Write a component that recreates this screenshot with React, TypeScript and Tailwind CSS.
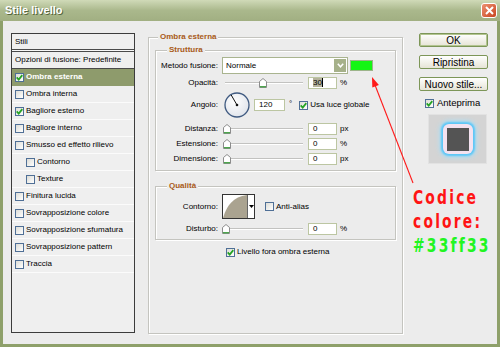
const UI = "font-['Liberation_Sans',Arial,sans-serif]";

function Check({ checked }: { checked?: boolean }) {
  return (
    <span className="w-[9px] h-[9px] shrink-0 border border-[#4f6f96] bg-gradient-to-br from-[#dcdcd6] to-white flex items-center justify-center">
      {checked && (
        <svg width="7" height="7" viewBox="0 0 7 7">
          <path d="M0.7 3.4 L2.7 5.6 L6.3 1.1" stroke="#23a323" strokeWidth="1.7" fill="none" />
        </svg>
      )}
    </span>
  );
}

function Slider({ thumb }: { thumb: number }) {
  return (
    <div className="relative w-[84px] h-[12px] shrink-0">
      <div className="absolute left-[3px] right-[3px] top-[5px] h-[2px] bg-[#c2c2c0] border-b border-white" />
      <svg className="absolute top-[1px]" style={{ left: thumb }} width="8" height="10" viewBox="0 0 8 10">
        <path d="M0.5 3.5 L4 0.5 L7.5 3.5 L7.5 9.5 L0.5 9.5 Z" fill="#fff" stroke="#8c8c8c" />
        <path d="M1 8.7 L7 8.7" stroke="#4ea64e" strokeWidth="1.4" />
      </svg>
    </div>
  );
}

function Field({ value, w = 29, selected }: { value: string; w?: number; selected?: boolean }) {
  return (
    <div
      className="h-[12px] shrink-0 border border-[#bcc6a2] bg-white pl-[4px] text-[8px] leading-[10px] text-black"
      style={{ width: w }}
    >
      {selected ? (
        <span className="bg-[#b4b29c] border-r border-black">{value}</span>
      ) : (
        value
      )}
    </div>
  );
}

function Label({ children }: { children: string }) {
  return <span className="w-[62px] shrink-0 text-right text-[8px] text-black">{children}</span>;
}

function Group({ title, className, children }: { title: string; className: string; children: React.ReactNode }) {
  return (
    <div className={"relative border border-[#c4c4bf] shadow-[inset_1px_1px_0_#fff,1px_1px_0_#fff] " + className}>
      <span className="absolute -top-[6px] bg-[#ececec] px-[2px] text-[8px] leading-[10px] font-bold text-[#a85a18]" style={{ left: title === "Ombra esterna" ? 9 : 11 }}>
        {title}
      </span>
      {children}
    </div>
  );
}

function Button({ children, main }: { children: string; main?: boolean }) {
  return (
    <div
      className={
        "w-[69px] h-[14px] rounded-[2px] border border-[#7d9658] bg-gradient-to-b from-white to-[#e6e4d6] flex items-center justify-center text-[10px] text-black " +
        (main ? "shadow-[inset_0_0_0_1px_#b3c590]" : "")
      }
    >
      {children}
    </div>
  );
}

const rows: { label: string; checked?: boolean; indent?: boolean; sel?: boolean }[] = [
  { label: "Ombra esterna", checked: true, sel: true },
  { label: "Ombra interna" },
  { label: "Bagliore esterno", checked: true },
  { label: "Bagliore interno" },
  { label: "Smusso ed effetto rilievo" },
  { label: "Contorno", indent: true },
  { label: "Texture", indent: true },
  { label: "Finitura lucida" },
  { label: "Sovrapposizione colore" },
  { label: "Sovrapposizione sfumatura" },
  { label: "Sovrapposizione pattern" },
  { label: "Traccia" },
];

export default function App() {
  return (
    <div className={"relative w-[500px] h-[347px] flex flex-col bg-[#8ea06a] overflow-hidden " + UI}>
      {/* title bar */}
      <div className="h-[21px] shrink-0 flex items-center justify-between pl-[5px] pr-[3px] bg-gradient-to-b from-[#d0dab8] via-[#aab88c] to-[#a1af82]">
        <span className="text-[11px] font-bold text-white [text-shadow:1px_1px_0_#56663c]">Stile livello</span>
        <div className="w-[16px] h-[15px] rounded-[3px] border border-white bg-gradient-to-br from-[#ec9070] to-[#c8421c] flex items-center justify-center">
          <svg width="9" height="9" viewBox="0 0 9 9">
            <path d="M1 1 L8 8 M8 1 L1 8" stroke="#fff" strokeWidth="2" />
          </svg>
        </div>
      </div>

      {/* body */}
      <div className="flex-1 mx-[3px] mb-[3px] bg-[#ececec] flex pl-[8px] pt-[12px]">
        {/* styles list */}
        <div className="w-[124px] h-[300px] shrink-0 border border-[#3c3c3c] bg-[#efefef] flex flex-col text-[8px] text-black">
          <div className="h-[16px] flex items-center pl-[3px] border-b border-[#4a4a4a]">Stili</div>
          <div className="h-[1px] bg-[#f8f8f8]" />
          <div className="h-[18px] flex items-center pl-[3px] border-y border-[#4a4a4a]">Opzioni di fusione: Predefinite</div>
          {rows.map((r) => (
            <div
              key={r.label}
              className={
                "h-[17px] flex items-center gap-[2px] border-b " +
                (r.indent ? "pl-[14px] " : "pl-[3px] ") +
                (r.sel ? "bg-[#8e9b6c] border-[#8e9b6c] text-white font-bold" : "border-[#fbfbfb]")
              }
            >
              <Check checked={r.checked} />
              <span>{r.label}</span>
            </div>
          ))}
        </div>

        {/* main group */}
        <Group title="Ombra esterna" className="ml-[13px] mt-[4px] w-[255px] h-[297px] shrink-0 px-[6px] pt-[12px]">
          <Group title="Struttura" className="h-[121px] pt-[6px] flex flex-col">
            <div className="flex items-center h-[17px]">
              <Label>Metodo fusione:</Label>
              <div className="ml-[4px] w-[126px] h-[17px] border border-[#a9b48f] bg-white flex items-center justify-between pl-[3px] pr-[1px]">
                <span className="text-[8px] text-black">Normale</span>
                <div className="w-[12px] h-[13px] bg-[#a6b18a] flex items-center justify-center">
                  <svg width="7" height="5" viewBox="0 0 7 5">
                    <path d="M0.8 0.8 L3.5 3.8 L6.2 0.8" stroke="#fff" strokeWidth="1.5" fill="none" />
                  </svg>
                </div>
              </div>
              <div className="ml-[2px] w-[23px] h-[11px] bg-[#14f514] border border-[#9cb48a]" />
            </div>
            <div className="flex items-center h-[12px] mt-[3px]">
              <Label>Opacità:</Label>
              <div className="ml-[4px]">
                <Slider thumb={37} />
              </div>
              <div className="ml-[2px]">
                <Field value="30" selected />
              </div>
              <span className="ml-[3px] text-[8px]">%</span>
            </div>
            <div className="flex items-center h-[26px] mt-[3px]">
              <Label>Angolo:</Label>
              <svg className="ml-[6px] shrink-0" width="26" height="26" viewBox="0 0 26 26">
                <defs>
                  <radialGradient id="dial" cx="40%" cy="35%" r="70%">
                    <stop offset="0" stopColor="#ffffff" />
                    <stop offset="1" stopColor="#dfe3ea" />
                  </radialGradient>
                </defs>
                <circle cx="13" cy="13" r="12" fill="url(#dial)" stroke="#3f5a80" strokeWidth="1.3" />
                <path d="M13 13 L7.2 3" stroke="#111" strokeWidth="1" />
                <circle cx="13" cy="13" r="1.3" fill="#111" />
              </svg>
              <div className="ml-[4px]">
                <Field value="120" w={31} />
              </div>
              <span className="ml-[4px] text-[8px] self-start mt-[6px]">°</span>
              <div className="ml-[7px] flex items-center gap-[2px]">
                <Check checked />
                <span className="text-[8px]">Usa luce globale</span>
              </div>
            </div>
            {[
              ["Distanza:", "px"],
              ["Estensione:", "%"],
              ["Dimensione:", "px"],
            ].map(([l, u], i) => (
              <div key={l} className={"flex items-center h-[12px] " + (i === 0 ? "mt-[5px]" : "mt-[3px]")}>
                <Label>{l}</Label>
                <div className="ml-[4px]">
                  <Slider thumb={1} />
                </div>
                <div className="ml-[2px]">
                  <Field value="0" />
                </div>
                <span className="ml-[3px] text-[8px]">{u}</span>
              </div>
            ))}
          </Group>

          <Group title="Qualità" className="mt-[15px] h-[54px] pt-[7px] flex flex-col">
            <div className="flex items-center h-[25px]">
              <Label>Contorno:</Label>
              <div className="ml-[4px] w-[33px] h-[25px] border border-[#333] bg-white flex shrink-0">
                <svg width="24" height="23" viewBox="0 0 24 23" className="shrink-0">
                  <path d="M0 23 C4 10 10 2 24 0 L24 23 Z" fill="#aaa390" />
                </svg>
                <div className="flex-1 border-l border-[#666] flex items-center justify-center">
                  <svg width="5" height="3" viewBox="0 0 5 3">
                    <path d="M0 0 L5 0 L2.5 3 Z" fill="#000" />
                  </svg>
                </div>
              </div>
              <div className="ml-[10px] flex items-center gap-[2px]">
                <Check />
                <span className="text-[8px]">Anti-alias</span>
              </div>
            </div>
            <div className="flex items-center h-[12px] mt-[4px]">
              <Label>Disturbo:</Label>
              <div className="ml-[4px]">
                <Slider thumb={0} />
              </div>
              <div className="ml-[2px]">
                <Field value="0" />
              </div>
              <span className="ml-[3px] text-[8px]">%</span>
            </div>
          </Group>

          <div className="mt-[6px] pl-[71px] flex items-center gap-[2px]">
            <Check checked />
            <span className="text-[8px]">Livello fora ombra esterna</span>
          </div>
        </Group>

        {/* right column */}
        <div className="ml-[16px] w-[69px] shrink-0 flex flex-col">
          <Button main>OK</Button>
          <div className="mt-[8px]">
            <Button>Ripristina</Button>
          </div>
          <div className="mt-[8px]">
            <Button>Nuovo stile...</Button>
          </div>
          <div className="mt-[7px] ml-[6px] flex items-center gap-[3px]">
            <Check checked />
            <span className="text-[9.5px] leading-[10px]">Anteprima</span>
          </div>
          <div className="mt-[6px] ml-[9px] w-[59px] h-[50px] bg-[#d4d4d4] border border-[#e2e2e2] flex items-center justify-center">
            <div className="w-[30px] h-[30px] rounded-[6px] bg-[#f4e2f0] shadow-[0_0_2px_2px_#5cc6f6,0_0_5px_3px_#a6e0fa] flex items-center justify-center">
              <div className="w-[22px] h-[23px] bg-[#545454]" />
            </div>
          </div>
          <div className="-ml-[6px] mt-[21px] w-[100px] origin-left scale-x-[0.73] font-['DejaVu_Sans',sans-serif] font-bold text-[19px] leading-[24px] tracking-[3px] text-[#ff1414] whitespace-nowrap">
            <div>Codice</div>
            <div>colore:</div>
            <div className="text-[#22f522]">#33ff33</div>
          </div>
        </div>
      </div>

      {/* annotation arrow */}
      <svg className="absolute left-0 top-0 pointer-events-none" width="500" height="347" viewBox="0 0 500 347">
        <path d="M413 183 L375 85" stroke="#ff1a1a" strokeWidth="1.1" />
        <polygon points="372,77 378.9,85 372.3,87.6" fill="#ff1a1a" />
      </svg>
    </div>
  );
}
